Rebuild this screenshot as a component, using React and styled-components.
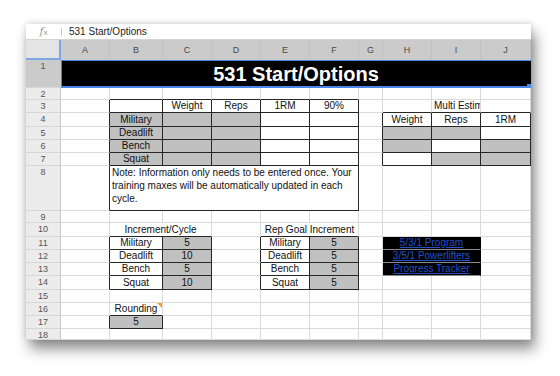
import React from 'react';
import styled, { createGlobalStyle, css } from 'styled-components';

const COLS = [35, 49, 53, 49, 49, 49, 49, 24, 49, 49, 50];
const LETTERS = ['A', 'B', 'C', 'D', 'E', 'F', 'G', 'H', 'I', 'J'];
const HEIGHTS = [28, 12, 13, 14, 13, 13, 13, 45, 12, 14, 13, 13, 13, 14, 13, 13, 13, 11];

const GRID = '#dadada';
const INK = '#262626';
const SILVER = '#c0c0c0';
const BLUE = '#4a86e8';

const NOTE = [
  'Note: Information only needs to be entered once. Your',
  'training maxes will be automatically updated in each',
  'cycle.',
];

// bordered cell, optionally grey
const box = (text = '', fill = false) => ({ b: true, text, fill });

const ROWS = [
  { 1: { span: 10, kind: 'title', text: '531 Start/Options' } },
  {},
  {
    2: box(), 3: box('Weight'), 4: box('Reps'), 5: box('1RM'), 6: box('90%'),
    9: { text: 'Multi Estimated 1RM', align: 'left' },
  },
  {
    2: box('Military', true), 3: box('', true), 4: box('', true), 5: box(), 6: box(),
    8: box('Weight'), 9: box('Reps'), 10: box('1RM'),
  },
  {
    2: box('Deadlift', true), 3: box('', true), 4: box('', true), 5: box(), 6: box(),
    8: box('', true), 9: box('', true), 10: box(),
  },
  {
    2: box('Bench', true), 3: box('', true), 4: box('', true), 5: box(), 6: box(),
    8: box('', true), 9: box(), 10: box('', true),
  },
  {
    2: box('Squat', true), 3: box('', true), 4: box('', true), 5: box(), 6: box(),
    8: box(), 9: box('', true), 10: box('', true),
  },
  { 2: { span: 5, b: true, kind: 'note' } },
  {},
  { 2: { span: 2, text: 'Increment/Cycle' }, 5: { span: 2, text: 'Rep Goal Increment' } },
  {
    2: box('Military'), 3: box('5', true), 5: box('Military'), 6: box('5', true),
    8: { span: 2, kind: 'link', text: '5/3/1 Program' },
  },
  {
    2: box('Deadlift'), 3: box('10', true), 5: box('Deadlift'), 6: box('5', true),
    8: { span: 2, kind: 'link', text: '3/5/1 Powerlifters' },
  },
  {
    2: box('Bench'), 3: box('5', true), 5: box('Bench'), 6: box('5', true),
    8: { span: 2, kind: 'link', text: 'Progress Tracker' },
  },
  { 2: box('Squat'), 3: box('10', true), 5: box('Squat'), 6: box('5', true) },
  {},
  { 2: { text: 'Rounding', comment: true } },
  { 2: box('5', true) },
  {},
];

const coverAt = (r, c) => {
  const row = ROWS[r];
  if (!row) return null;
  for (const key of Object.keys(row)) {
    const start = Number(key);
    const span = row[key].span || 1;
    if (c >= start && c < start + span) return row[key];
  }
  return null;
};

const boxed = (r, c) => !!(coverAt(r, c) && coverAt(r, c).b);

const GlobalStyle = createGlobalStyle`
  body {
    margin: 0;
    background: #fff;
    font-family: "Liberation Sans", Arial, sans-serif;
  }
`;

const Page = styled.div`
  padding: 24px 0 0 26px;
  height: 376px;
  box-sizing: border-box;
`;

const Window = styled.div`
  width: 505px;
  height: 316px;
  background: #fff;
  overflow: hidden;
  box-shadow: 0 -1px 6px rgba(0, 0, 0, 0.14), 4px 9px 13px rgba(0, 0, 0, 0.45);
`;

const FormulaBar = styled.div`
  height: 16px;
  box-sizing: border-box;
  display: flex;
  align-items: center;
  border-bottom: 1px solid #d4d4d4;
`;

const Fx = styled.div`
  width: 35px;
  text-align: center;
  color: #9a9a9a;
  font-family: "DejaVu Serif", serif;
  font-style: italic;
  font-size: 11px;
  line-height: 15px;

  span {
    font-style: normal;
    font-family: "Liberation Sans", Arial, sans-serif;
    font-size: 8px;
  }
`;

const Divider = styled.div`
  width: 1px;
  height: 8px;
  background: #cfcfcf;
`;

const FormulaText = styled.div`
  margin-left: 7px;
  font-size: 10px;
  color: #222;
`;

const SheetRow = styled.div`
  display: grid;
  grid-template-columns: ${COLS.map((w) => `${w}px`).join(' ')};
  grid-template-rows: ${(p) => p.$h}px;
  height: ${(p) => p.$h}px;
  overflow: hidden;
`;

const Corner = styled.div`
  background: #e4e4e4;
  box-shadow: inset -2px -2px 0 #7ea6e6;
`;

const ColHead = styled.div`
  box-sizing: border-box;
  background: #cbcbcb;
  border-right: 1px solid #c2c2c2;
  color: #4a4a4a;
  font-size: 9px;
  line-height: 20px;
  text-align: center;
`;

const RowHead = styled.div`
  box-sizing: border-box;
  overflow: hidden;
  background: ${(p) => (p.$active ? '#cbcbcb' : '#ececec')};
  border-right: 1px solid #c8c8c8;
  border-bottom: 1px solid #d6d6d6;
  color: #555;
  font-size: 9px;
  line-height: 12px;
  text-align: center;
`;

const Cell = styled.div`
  grid-column: span ${(p) => p.$span};
  position: relative;
  box-sizing: border-box;
  min-width: 0;
  min-height: 0;
  overflow: hidden;
  display: flex;
  align-items: center;
  justify-content: ${(p) => (p.$align === 'left' ? 'flex-start' : 'center')};
  padding: 0 2px;
  background: ${(p) => (p.$fill ? SILVER : '#fff')};
  border-right: 1px solid ${(p) => (p.$right ? INK : GRID)};
  border-bottom: 1px solid ${(p) => (p.$bottom ? INK : GRID)};
  color: #111;
  font-size: 10px;
  line-height: 12px;
  white-space: nowrap;

  ${(p) =>
    p.$comment &&
    css`
      &::after {
        content: '';
        position: absolute;
        top: 0;
        right: 0;
        border-top: 5px solid #f5a02a;
        border-left: 5px solid transparent;
      }
    `}
`;

const TitleCell = styled(Cell)`
  background: #000;
  border: none;
  color: #fff;
  font-size: 20px;
  font-weight: bold;
  line-height: 28px;
  box-shadow: inset 1px 1px 0 ${BLUE}, inset 0 -2px 0 ${BLUE};

  &::after {
    content: '';
    position: absolute;
    right: 0;
    bottom: 0;
    width: 4px;
    height: 4px;
    background: ${BLUE};
  }
`;

const NoteCell = styled(Cell)`
  display: block;
  white-space: normal;
  text-align: left;
  line-height: 13px;
`;

const LinkCell = styled(Cell)`
  background: #000;
  border-right-color: #000;
  border-bottom-color: #8a8a8a;
`;

const Link = styled.a`
  color: #2350c8;
  text-decoration: underline;
  cursor: pointer;
`;

function renderCells(r) {
  const out = [];
  let c = 1;
  while (c <= 10) {
    const cell = ROWS[r][c] || {};
    const span = cell.span || 1;
    const last = c + span - 1;
    let bottom = false;
    for (let k = c; k <= last; k++) {
      if (boxed(r, k) || boxed(r + 1, k)) bottom = true;
    }
    const right = boxed(r, last) || boxed(r, last + 1);
    const props = {
      key: c,
      $span: span,
      $fill: cell.fill,
      $align: cell.align,
      $bottom: bottom,
      $right: right,
      $comment: cell.comment,
    };

    if (cell.kind === 'title') {
      out.push(<TitleCell {...props}>{cell.text}</TitleCell>);
    } else if (cell.kind === 'note') {
      out.push(
        <NoteCell {...props}>
          {NOTE.map((line, i) => (
            <React.Fragment key={i}>
              {line}
              {i < NOTE.length - 1 && <br />}
            </React.Fragment>
          ))}
        </NoteCell>
      );
    } else if (cell.kind === 'link') {
      out.push(
        <LinkCell {...props}>
          <Link>{cell.text}</Link>
        </LinkCell>
      );
    } else {
      out.push(<Cell {...props}>{cell.text}</Cell>);
    }
    c += span;
  }
  return out;
}

export default function App() {
  return (
    <Page>
      <GlobalStyle />
      <Window>
        <FormulaBar>
          <Fx>
            f<span>x</span>
          </Fx>
          <Divider />
          <FormulaText>531 Start/Options</FormulaText>
        </FormulaBar>

        <SheetRow $h={20}>
          <Corner />
          {LETTERS.map((l) => (
            <ColHead key={l}>{l}</ColHead>
          ))}
        </SheetRow>

        {ROWS.map((_, r) => (
          <SheetRow key={r} $h={HEIGHTS[r]}>
            <RowHead $active={r === 0}>{r + 1}</RowHead>
            {renderCells(r)}
          </SheetRow>
        ))}
      </Window>
    </Page>
  );
}
